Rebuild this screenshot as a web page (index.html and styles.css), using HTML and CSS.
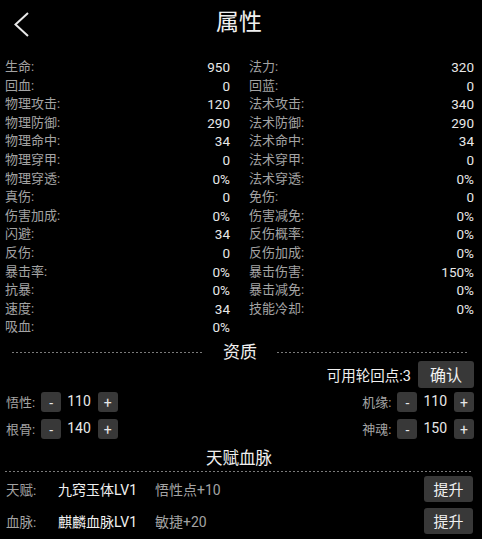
FILE: index.html
```html
<!DOCTYPE html>
<html lang="zh">
<head>
<meta charset="utf-8">
<title>属性</title>
<link rel="stylesheet" href="styles.css">
</head>
<body>
<div class="page">
  <header class="header">
    <svg class="back" width="40" height="46" viewBox="0 0 40 46">
      <polyline points="28,13 15.5,24.5 28,36" fill="none" stroke="#e8e8e8" stroke-width="2"/>
    </svg>
    <div class="title">属性</div>
    <div class="spacer"></div>
  </header>

  <section class="stats">
    <div class="stat"><span class="k">生命:</span><span class="v">950</span></div>
    <div class="stat"><span class="k">法力:</span><span class="v">320</span></div>
    <div class="stat"><span class="k">回血:</span><span class="v">0</span></div>
    <div class="stat"><span class="k">回蓝:</span><span class="v">0</span></div>
    <div class="stat"><span class="k">物理攻击:</span><span class="v">120</span></div>
    <div class="stat"><span class="k">法术攻击:</span><span class="v">340</span></div>
    <div class="stat"><span class="k">物理防御:</span><span class="v">290</span></div>
    <div class="stat"><span class="k">法术防御:</span><span class="v">290</span></div>
    <div class="stat"><span class="k">物理命中:</span><span class="v">34</span></div>
    <div class="stat"><span class="k">法术命中:</span><span class="v">34</span></div>
    <div class="stat"><span class="k">物理穿甲:</span><span class="v">0</span></div>
    <div class="stat"><span class="k">法术穿甲:</span><span class="v">0</span></div>
    <div class="stat"><span class="k">物理穿透:</span><span class="v">0%</span></div>
    <div class="stat"><span class="k">法术穿透:</span><span class="v">0%</span></div>
    <div class="stat"><span class="k">真伤:</span><span class="v">0</span></div>
    <div class="stat"><span class="k">免伤:</span><span class="v">0</span></div>
    <div class="stat"><span class="k">伤害加成:</span><span class="v">0%</span></div>
    <div class="stat"><span class="k">伤害减免:</span><span class="v">0%</span></div>
    <div class="stat"><span class="k">闪避:</span><span class="v">34</span></div>
    <div class="stat"><span class="k">反伤概率:</span><span class="v">0%</span></div>
    <div class="stat"><span class="k">反伤:</span><span class="v">0</span></div>
    <div class="stat"><span class="k">反伤加成:</span><span class="v">0%</span></div>
    <div class="stat"><span class="k">暴击率:</span><span class="v">0%</span></div>
    <div class="stat"><span class="k">暴击伤害:</span><span class="v">150%</span></div>
    <div class="stat"><span class="k">抗暴:</span><span class="v">0%</span></div>
    <div class="stat"><span class="k">暴击减免:</span><span class="v">0%</span></div>
    <div class="stat"><span class="k">速度:</span><span class="v">34</span></div>
    <div class="stat"><span class="k">技能冷却:</span><span class="v">0%</span></div>
    <div class="stat"><span class="k">吸血:</span><span class="v">0%</span></div>
    <div class="stat"></div>
  </section>

  <div class="divider">
    <span class="line"></span>
    <span class="divider-text">资质</span>
    <span class="line"></span>
  </div>

  <div class="points">
    <span class="points-text">可用轮回点:3</span>
    <button class="btn confirm">确认</button>
  </div>

  <div class="attr-row">
    <div class="attr">
      <span class="attr-k">悟性:</span>
      <span class="pm">-</span>
      <span class="attr-v">110</span>
      <span class="pm">+</span>
    </div>
    <div class="attr">
      <span class="attr-k">机缘:</span>
      <span class="pm">-</span>
      <span class="attr-v">110</span>
      <span class="pm">+</span>
    </div>
  </div>
  <div class="attr-row second">
    <div class="attr">
      <span class="attr-k">根骨:</span>
      <span class="pm">-</span>
      <span class="attr-v">140</span>
      <span class="pm">+</span>
    </div>
    <div class="attr">
      <span class="attr-k">神魂:</span>
      <span class="pm">-</span>
      <span class="attr-v">150</span>
      <span class="pm">+</span>
    </div>
  </div>

  <div class="sub-title">天赋血脉</div>
  <div class="sub-line"></div>

  <div class="talent">
    <span class="talent-k">天赋:</span>
    <span class="talent-name">九窍玉体LV1</span>
    <span class="talent-desc">悟性点+10</span>
    <button class="btn up">提升</button>
  </div>
  <div class="talent second">
    <span class="talent-k">血脉:</span>
    <span class="talent-name">麒麟血脉LV1</span>
    <span class="talent-desc">敏捷+20</span>
    <button class="btn up">提升</button>
  </div>
</div>
</body>
</html>
```
FILE: styles.css
```css
html, body {
  margin: 0;
  padding: 0;
  background: #000;
}
body {
  font-family: Roboto, "Noto Sans CJK SC", sans-serif;
  color: #e6e6e6;
  width: 482px;
  height: 539px;
  overflow: hidden;
}
.page {
  display: flex;
  flex-direction: column;
}
.header {
  height: 46px;
  display: grid;
  grid-template-columns: 40px 1fr 40px;
  align-items: center;
}
.back {
  display: block;
}
.title {
  text-align: center;
  font-size: 23px;
  line-height: 46px;
  color: #f0f0f0;
  margin-left: -4px;
}
.stats {
  margin-top: 12px;
  display: grid;
  grid-template-columns: 225px 225px;
  column-gap: 19px;
  grid-auto-rows: 18.6px;
  padding: 0 8px 0 5px;
  font-size: 13px;
}
.stat {
  display: flex;
  justify-content: space-between;
  align-items: center;
  line-height: 18.6px;
}
.k {
  color: #a3a3a3;
}
.v {
  color: #e8e8e8;
  font-size: 13.5px;
}
.divider {
  margin-top: 6px;
  height: 18px;
  display: flex;
  align-items: center;
  gap: 20px;
  padding: 0 14px 0 12px;
}
.line {
  flex: 1;
  height: 1px;
  margin-top: 1px;
  background-image: repeating-linear-gradient(to right, #7a7a7a 0 2px, transparent 2px 4px);
}
.divider-text {
  font-size: 17px;
  line-height: 18px;
  color: #f0f0f0;
}
.points {
  height: 27px;
  display: flex;
  justify-content: flex-end;
  align-items: center;
  gap: 7px;
  padding-right: 8px;
}
.points-text {
  font-size: 14.5px;
  color: #f0f0f0;
}
.btn {
  border: none;
  background: #383838;
  color: #f0f0f0;
  font-family: Roboto, "Noto Sans CJK SC", sans-serif;
  border-radius: 3px;
  padding: 0;
  display: flex;
  align-items: center;
  justify-content: center;
}
.confirm {
  width: 56px;
  height: 27px;
  font-size: 16px;
}
.attr-row {
  margin-top: 4px;
  height: 20px;
  display: flex;
  justify-content: space-between;
  padding: 0 8px 0 6px;
}
.attr-row.second {
  margin-top: 7px;
}
.attr {
  display: flex;
  align-items: center;
  gap: 6px;
}
.attr-k {
  font-size: 13px;
  color: #a3a3a3;
}
.attr-v {
  font-size: 14px;
  color: #e8e8e8;
  margin: 0 1px 2px 0;
}
.pm {
  width: 20px;
  height: 20px;
  background: #383838;
  border-radius: 3px;
  color: #e8e8e8;
  font-size: 14px;
  line-height: 22px;
  text-align: center;
}
.sub-title {
  margin: 10px 9px 0 5px;
  height: 22px;
  line-height: 20px;
  text-align: center;
  font-size: 16.5px;
  color: #f0f0f0;
}
.sub-line {
  margin: 0 9px 0 5px;
  height: 1px;
  background-image: repeating-linear-gradient(to right, #7a7a7a 0 2px, transparent 2px 4px);
}
.talent {
  margin-top: 4px;
  height: 26px;
  display: flex;
  align-items: center;
  padding: 0 9px 0 6px;
  font-size: 14px;
}
.talent.second {
  margin-top: 6px;
}
.talent-k {
  width: 52px;
  color: #a3a3a3;
  font-size: 13.5px;
}
.talent-name {
  color: #f0f0f0;
  width: 97px;
}
.talent-desc {
  color: #a3a3a3;
  flex: 1;
}
.up {
  width: 49px;
  height: 26px;
  font-size: 15px;
}
```
